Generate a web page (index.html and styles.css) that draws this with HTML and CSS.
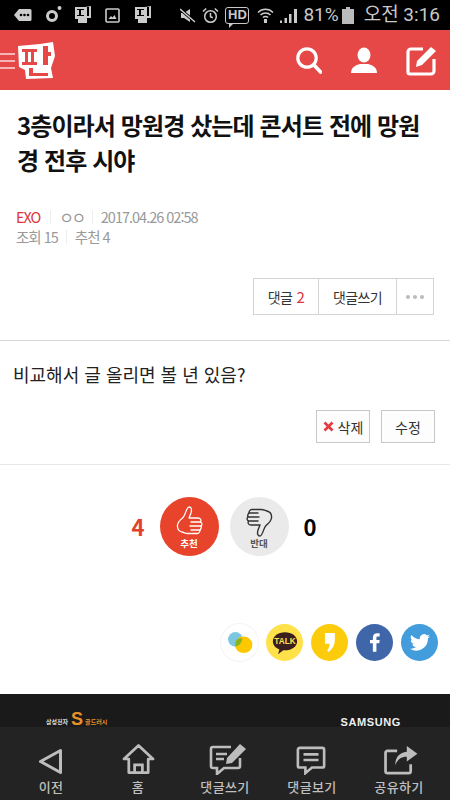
FILE: index.html
```html
<!DOCTYPE html>
<html lang="ko">
<head>
<meta charset="utf-8">
<title>판</title>
<link rel="stylesheet" href="styles.css">
</head>
<body>
<div class="page">
  <div class="status">
    <div class="status-left">
      <svg class="si" width="18" height="14" viewBox="0 0 18 14"><path d="M5 1h11a1.500 1.500 0 0 1 1.500 1.500v9a1.500 1.500 0 0 1-1.500 1.500H5L0 7z" fill="#ccc"/><circle cx="7" cy="7" r="1.300" fill="#000"/><circle cx="10.500" cy="7" r="1.300" fill="#000"/><circle cx="14" cy="7" r="1.300" fill="#000"/></svg>
      <svg class="si s2" width="18" height="18" viewBox="0 0 18 18"><circle cx="7" cy="11" r="4.500" fill="none" stroke="#ccc" stroke-width="3"/><circle cx="14.500" cy="3" r="2" fill="#ccc"/></svg>
      <svg class="si s3" width="18" height="18" viewBox="0 0 18 18"><path d="M1 1h10l6-1v12h-4v5H4v-4H1z" fill="#ccc"/><path d="M3 3h7v1H7v5h3v1H3V9h2V4H3zM13 1h2v9h-2z" fill="#000"/></svg>
      <svg class="si s4" width="15" height="15" viewBox="0 0 15 15"><rect x="1" y="1" width="13" height="13" rx="1" fill="none" stroke="#ccc" stroke-width="1.600"/><path d="M3.500 11l2.500-3 1.500 1.500L9.500 7l2 4z" fill="#ccc"/></svg>
      <svg class="si s5" width="18" height="18" viewBox="0 0 18 18"><path d="M1 1h10l6-1v12h-4v5H4v-4H1z" fill="#ccc"/><path d="M3 3h7v1H7v5h3v1H3V9h2V4H3zM13 1h2v9h-2z" fill="#000"/></svg>
    </div>
    <div class="status-right">
      <svg class="si" width="16" height="15" viewBox="0 0 16 15"><path d="M1 5h3l6-4v13l-6-4H1z" fill="#ccc"/><path d="M0 1l15 13" stroke="#000" stroke-width="3"/><path d="M0 1l15 13" stroke="#ccc" stroke-width="1.400"/></svg>
      <svg class="si s6" width="17" height="17" viewBox="0 0 17 17"><circle cx="8.500" cy="9.500" r="5.800" fill="none" stroke="#ccc" stroke-width="1.500"/><path d="M8.500 6v3.800l2.300 1M1 4.500l3.200-3M16 4.500l-3.200-3" fill="none" stroke="#ccc" stroke-width="1.500"/></svg>
      <span class="hd">HD</span>
      <svg class="si s7" width="17" height="16" viewBox="0 0 17 16"><path d="M1 5.500a10.500 10.500 0 0 1 15 0M3.500 8a7 7 0 0 1 10 0M6 10.500a3.500 3.500 0 0 1 5 0" fill="none" stroke="#ccc" stroke-width="1.500"/><path d="M7 12h3v4H7z" fill="#ccc"/></svg>
      <svg class="si s8" width="17" height="15" viewBox="0 0 17 15"><path d="M0 12.500h2V15H0zM4.500 10h2.500v5H4.500zM9 6h2.500v9H9zM14 1h3v14h-3z" fill="#ccc"/></svg>
      <span class="pct">81%</span>
      <svg class="si s9" width="12" height="17" viewBox="0 0 12 17"><path d="M4 0h4v2h4v15H0V2h4z" fill="#bbb"/></svg>
      <span class="clock">오전 3:16</span>
    </div>
  </div>

  <header class="top">
    <div class="brand">
      <div class="burger"><i></i><i></i><i></i></div>
      <svg class="logo" width="37" height="37" viewBox="0 0 37 37"><path d="M0 4L22 2 35 0 37 14 33 26 35 36 8 37 7 28 1 25z" fill="#fff"/><path fill-rule="evenodd" d="M4 7h15v3h-3v10h3v3H4v-3h3V10H4zM10 10v10h3V10zM25 4h5v6h3v4h-3v9h-5zM11 26h4v5h15v3H11z" fill="#e64747"/></svg>
    </div>
    <div class="tools">
      <svg width="26" height="27" viewBox="0 0 26 27"><circle cx="11" cy="11" r="9.200" fill="none" stroke="#fff" stroke-width="3.200"/><path d="M18 18l6.500 7" stroke="#fff" stroke-width="3.600" stroke-linecap="round"/></svg>
      <svg width="26" height="26" viewBox="0 0 26 26"><ellipse cx="13" cy="8" rx="6.500" ry="7.500" fill="#fff"/><path d="M0 26c0-6 5-8 9-9h8c4 1 9 3 9 9z" fill="#fff"/></svg>
      <svg width="31" height="31" viewBox="0 0 31 31"><path d="M17 4H5a3 3 0 0 0-3 3v20a2 2 0 0 0 2 2h21a3 3 0 0 0 3-3V14" fill="none" stroke="#fff" stroke-width="3.200"/><path d="M10 22l1-6L25 2l5 4-14 14z" fill="#fff"/></svg>
    </div>
  </header>

  <main>
    <h1 class="title">3층이라서 망원경 샀는데 콘서트 전에 망원경 전후 시야</h1>
    <div class="meta">
      <div class="meta-line"><span class="cat">EXO</span><span class="sep"></span><span class="nick">ㅇㅇ</span><span class="sep"></span><span>2017.04.26 02:58</span></div>
      <div class="meta-line"><span>조회 15</span><span class="sep"></span><span>추천 4</span></div>
    </div>
    <div class="btn-row">
      <div class="btn-group">
        <span class="gb b1">댓글 <em>2</em></span>
        <span class="gb b2">댓글쓰기</span>
        <span class="gb b3"><i></i><i></i><i></i></span>
      </div>
    </div>
    <article class="body">
      <p class="text">비교해서 글 올리면 볼 년 있음?</p>
      <div class="actions">
        <span class="act del"><svg width="11" height="11" viewBox="0 0 11 11"><path d="M1.500 1.500l8 8M9.500 1.500l-8 8" stroke="#e8383f" stroke-width="2.600"/></svg>삭제</span>
        <span class="act edit">수정</span>
      </div>
    </article>
    <div class="votes">
      <span class="num up">4</span>
      <div class="circle red">
        <svg width="27" height="31" viewBox="0 0 27 31"><path d="M13 1c2.500 0 3 2.500 2 6l-2 5h9c2.500 0 3.500 2 2.500 4 1.800 1 1.800 3 .5 4 .8 1.800 0 3-1 4 0 2-1.500 3.500-3 3.500H12c-3 0-4-1-6-1.500-3.500-1-5-3-4.500-7 .4-3.500 3-5.500 5.500-7.500C9.500 9 10.500 1 13 1z" fill="none" stroke="#fff" stroke-width="1.300" stroke-linejoin="round"/><path d="M15 16h9.500M14 20h11M15 24h9" stroke="#fff" stroke-width="1.300" stroke-linecap="round"/></svg>
        <span>추천</span>
      </div>
      <div class="circle grey">
        <svg width="27" height="31" viewBox="0 0 27 31"><path d="M14 30c-2.500 0-3-2.500-2-6l2-5H5c-2.500 0-3.500-2-2.500-4-1.800-1-1.800-3-.5-4-.8-1.800 0-3 1-4 0-2 1.500-3.500 3-3.500h9c3 0 4 1 6 1.500 3.500 1 5 3 4.500 7-.4 3.500-3 5.500-5.500 7.500C17.500 22 16.500 30 14 30z" fill="none" stroke="#333" stroke-width="1.400" stroke-linejoin="round"/><path d="M12 15H2.500M13 11H2M12 7H3" stroke="#333" stroke-width="1.400" stroke-linecap="round"/></svg>
        <span>반대</span>
      </div>
      <span class="num down">0</span>
    </div>
    <div class="share">
      <span class="sc c1"><svg width="26" height="22" viewBox="0 0 28 24"><circle cx="9" cy="8" r="8" fill="#7cc7e0"/><ellipse cx="18" cy="14" rx="9.500" ry="9" fill="#fdc800"/><path d="M10.500 8.200a9 9 0 0 1 6-1.200c-.3 4.500-3.300 8-7.500 8.800a9 9 0 0 1 1.500-7.600z" fill="#86b41e"/></svg></span>
      <span class="sc c2"><svg width="26" height="24" viewBox="0 0 30 27"><path d="M15 1c8 0 14 4.500 14 10.500S23 22 15 22l-2 0-6 4.500 1.500-5.500C4 19 1 16 1 11.500 1 5.500 7 1 15 1z" fill="#3b1e1e"/><text x="15" y="15" class="talk">TALK</text></svg></span>
      <span class="sc c3"><svg width="11" height="19" viewBox="0 0 14 25"><path d="M1 0h13v10c0 6-3 11-8 15l-2-2c2-3 3-6 3-9H1z" fill="#fff"/></svg></span>
      <span class="sc c4"><svg width="10" height="19" viewBox="0 0 14 26"><path d="M4 26V14H0v-4.500h4V6c0-4 2.500-6 6-6h3.500v4.500H11c-1.500 0-2 .7-2 2v3h4.500L13 14H9v12z" fill="#fff"/></svg></span>
      <span class="sc c5"><svg width="20" height="17" viewBox="0 0 24 20"><path d="M24 2.400c-.9.400-1.800.7-2.800.8 1-.6 1.800-1.600 2.200-2.700-1 .6-2 1-3.100 1.200A4.900 4.900 0 0 0 11.900 6.200 14 14 0 0 1 1.700 1a4.900 4.900 0 0 0 1.500 6.600c-.8 0-1.600-.2-2.200-.6 0 2.400 1.700 4.400 3.900 4.900-.7.200-1.500.2-2.200.1.600 2 2.400 3.400 4.600 3.400A9.900 9.900 0 0 1 0 17.400 14 14 0 0 0 21.500 5c1-.7 1.800-1.600 2.500-2.600z" fill="#fff"/></svg></span>
    </div>
  </main>

  <div class="ad">
    <div class="ad-left"><span class="ad-small">삼성전자</span><span class="ad-s">S</span><span class="ad-gold">골드러시</span></div>
    <span class="ad-sam">SAMSUNG</span>
  </div>

  <nav class="bottom">
    <div class="nav-item"><svg class="nv-back" width="25" height="27" viewBox="0 0 25 27"><path d="M22.500 2.500v22L2.500 13.500z" fill="none" stroke="#bdbdbd" stroke-width="3" stroke-linejoin="round"/></svg><span>이전</span></div>
    <div class="nav-item"><svg width="33" height="32" viewBox="0 0 34 32"><path d="M2 16L17 2l15 14h-5v14H7V16z" fill="none" stroke="#bdbdbd" stroke-width="2.800" stroke-linejoin="round"/><path d="M13 30v-8h8v8" fill="none" stroke="#bdbdbd" stroke-width="2.800"/></svg><span>홈</span></div>
    <div class="nav-item"><svg class="nv-write" width="38" height="32" viewBox="0 0 38 32"><path d="M22 4H4a2 2 0 0 0-2 2v17a2 2 0 0 0 2 2h4v6l7-6h14a2 2 0 0 0 2-2V15" fill="none" stroke="#bdbdbd" stroke-width="2.600"/><path d="M7 11h11M7 16h8" stroke="#bdbdbd" stroke-width="2.400"/><path d="M17 21l1-6L31 1l6 5-14 14z" fill="#bdbdbd"/></svg><span>댓글쓰기</span></div>
    <div class="nav-item"><svg class="nv-view" width="30" height="30" viewBox="0 0 32 32"><path d="M4 3h24a2 2 0 0 1 2 2v17a2 2 0 0 1-2 2H17l-7 6v-6H4a2 2 0 0 1-2-2V5a2 2 0 0 1 2-2z" fill="none" stroke="#bdbdbd" stroke-width="2.800"/><path d="M8 10h16M8 16h16" stroke="#bdbdbd" stroke-width="2.800"/></svg><span>댓글보기</span></div>
    <div class="nav-item"><svg class="nv-share" width="36" height="29" viewBox="0 0 36 30"><path d="M14 5H4a2 2 0 0 0-2 2v19a2 2 0 0 0 2 2h22a2 2 0 0 0 2-2v-7" fill="none" stroke="#bdbdbd" stroke-width="2.800"/><path d="M24 0l11 8-11 8v-5c-6 0-10 3-12 9 0-8 4-13 12-14z" fill="#bdbdbd"/></svg><span>공유하기</span></div>
  </nav>
</div>
</body>
</html>
```
FILE: styles.css
```css
* { box-sizing: border-box; }
html, body { margin: 0; padding: 0; background: #fff; }
body { font-family: "Noto Sans CJK KR", "Noto Sans", sans-serif; }
.page { position: relative; width: 450px; height: 800px; overflow: hidden; display: flex; flex-direction: column; }

.status { height: 30px; background: #000; color: #c8c8c8; display: flex; justify-content: space-between; align-items: center; flex: none; }
.status-left { display: flex; align-items: center; padding-left: 14px; }
.status-right { display: flex; align-items: center; padding-right: 10px; }
.si { display: block; flex: none; }
.s2 { margin-left: 13px; margin-top: -2px; }
.s3 { margin-left: 11px; }
.s4 { margin-left: 13px; }
.s5 { margin-left: 14px; }
.s6 { margin-left: 6px; }
.hd { position: relative; margin-left: 6px; width: 24px; height: 17px; border: 1.500px solid #c8c8c8; border-radius: 3px; font: bold 13px/14px "Liberation Sans", sans-serif; text-align: center; }
.hd::after { content: ""; position: absolute; left: 3px; bottom: -5px; width: 0; height: 0; border-top: 4px solid #c8c8c8; border-right: 4px solid transparent; }
.s7 { margin-left: 8px; }
.s8 { margin-left: 6px; }
.pct { font: 19px/20px Roboto, sans-serif; margin-left: 6px; }
.s9 { margin-left: 3px; }
.clock { font: 19px/20px Roboto, "Noto Sans CJK KR", sans-serif; margin-left: 10px; }

.top { height: 60px; background: #e64747; display: flex; justify-content: space-between; align-items: center; flex: none; padding: 0 13px 0 0; }
.brand { display: flex; align-items: center; }
.burger { width: 15px; display: flex; flex-direction: column; gap: 5px; margin-top: 1px; }
.burger i { display: block; height: 2px; background: #f6b5b5; }
.logo { margin-left: 3px; margin-top: 0; }
.tools { display: flex; align-items: center; gap: 29px; }

.title { margin: 0; padding: 17px 20px 0 17px; font-size: 24px; line-height: 35px; font-weight: 700; color: #111; letter-spacing: -.9px; height: 105px; }
.meta { padding: 12px 0 0 16px; font-size: 14.500px; line-height: 20px; color: #999; letter-spacing: -1px; height: 83px; }
.meta-line { display: flex; align-items: center; }
.cat { color: #d9363e; margin-right: 2px; }
.nick { font-size: 16px; letter-spacing: -2.500px; }
.sep { width: 1px; height: 14px; background: #eee; margin: 0 8px; }

.btn-row { display: flex; justify-content: flex-end; padding: 0 16px 0 0; height: 62px; }
.btn-group { display: flex; height: 37px; border: 1px solid #d4d4d4; }
.gb { display: flex; align-items: center; justify-content: center; font-size: 14px; color: #333; letter-spacing: -.6px; border-right: 1px solid #d4d4d4; gap: 4px; }
.gb em { font-style: normal; color: #d9363e; font-size: 15px; }
.b1 { width: 65px; }
.b2 { width: 78px; }
.b3 { width: 36px; border-right: 0; gap: 3px; }
.b3 i { width: 4px; height: 4px; border-radius: 50%; background: #bbb; }

.body { border-top: 1px solid #d8d8d8; height: 125px; border-bottom: 1px solid #e8e8e8; padding: 0 15px 0 13px; }
.text { margin: 0; padding-top: 19px; font-size: 18px; line-height: 28px; color: #222; height: 69px; }
.actions { display: flex; justify-content: flex-end; gap: 11px; }
.act { height: 33px; border: 1px solid #c8c8c8; display: flex; align-items: center; justify-content: center; font-size: 14px; color: #333; gap: 4px; background: #fdfdfd; }
.del { width: 54px; }
.edit { width: 54px; }

.votes { display: flex; align-items: center; justify-content: center; height: 60px; margin-top: 31px; padding-right: 2px; }
.num { font-size: 22px; font-weight: 700; width: 28px; }
.up { color: #e0432b; }
.down { color: #000; text-align: right; }
.circle { width: 59px; height: 59px; border-radius: 50%; display: flex; flex-direction: column; align-items: center; justify-content: center; font-size: 9.500px; font-weight: 700; line-height: 12px; }
.circle svg { margin-top: 2px; }
.red { background: #e8432b; color: #fff; margin: 0 11px 0 0; }
.grey { background: #eaeaea; color: #555; }

.share { display: flex; justify-content: flex-end; gap: 8px; padding: 0 12px 0 0; margin-top: 68px; }
.sc { width: 37px; height: 37px; border-radius: 50%; display: flex; align-items: center; justify-content: center; }
.c1 { background: #fff; box-shadow: 0 0 0 1px #f4f4f4; }
.c2 { background: #ffe14a; }
.c3 { background: #fccc0c; }
.c4 { background: #3f66a8; }
.c5 { background: #439cdc; }
.talk { font: 800 9.500px "Liberation Sans", sans-serif; fill: #ffe14a; text-anchor: middle; }

.ad { position: absolute; left: 0; right: 0; top: 694px; height: 33px; background: #1a1a1a; display: flex; justify-content: space-between; align-items: flex-end; padding: 0 49px 0 46px; }
.ad-left { display: flex; align-items: flex-end; height: 20px; color: #ddd; font-size: 6px; }
.ad-small { font-weight: 700; line-height: 8px; margin-bottom: 1px; }
.ad-s { color: #e8912b; font: 700 18px/15px "Liberation Sans", sans-serif; margin: 0 2px 0 3px; }
.ad-gold { color: #e8912b; font-weight: 700; line-height: 8px; margin-bottom: 1px; }
.ad-sam { color: #eee; font: 700 11px/14px "Liberation Sans", sans-serif; letter-spacing: .6px; margin-bottom: -2px; }

.bottom { position: absolute; left: 0; right: 0; bottom: 0; height: 73px; background: #232323; display: flex; justify-content: center; }
.nav-item { width: 87px; display: flex; flex-direction: column; align-items: center; color: #c0c0c0; font-size: 13px; font-weight: 500; letter-spacing: .4px; height: 73px; justify-content: flex-end; }
.nav-item svg { margin-bottom: 3px; }
.nav-item span { line-height: 18px; margin-bottom: 4px; }
.nav-item .nv-back { margin-left: -2px; }
.nav-item .nv-write { margin-left: 6px; }
.nav-item .nv-view { margin-left: -2px; }
.nav-item .nv-share { margin-left: 3px; }
```
